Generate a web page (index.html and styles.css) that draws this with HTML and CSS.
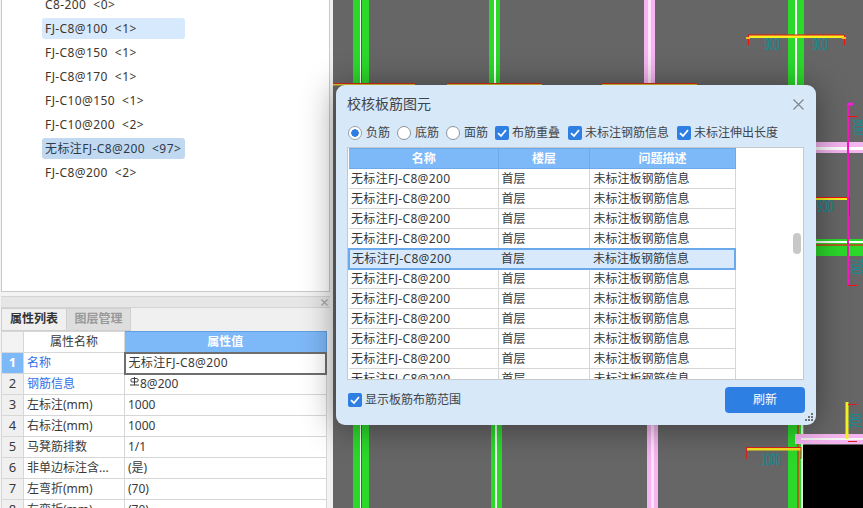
FILE: index.html
```html
<!DOCTYPE html>
<html lang="zh-CN">
<head>
<meta charset="utf-8">
<title>校核板筋图元</title>
<link rel="stylesheet" href="styles.css">
</head>
<body>
<div class="app">
  <aside class="side">
    <section class="tree">
      <ul class="tree-list">
        <li class="tree-item"><span>C8-200</span><i>&lt;0&gt;</i></li>
        <li class="tree-item hover"><span>FJ-C8@100</span><i>&lt;1&gt;</i></li>
        <li class="tree-item"><span>FJ-C8@150</span><i>&lt;1&gt;</i></li>
        <li class="tree-item"><span>FJ-C8@170</span><i>&lt;1&gt;</i></li>
        <li class="tree-item"><span>FJ-C10@150</span><i>&lt;1&gt;</i></li>
        <li class="tree-item"><span>FJ-C10@200</span><i>&lt;2&gt;</i></li>
        <li class="tree-item selected"><span>无标注FJ-C8@200</span><i>&lt;97&gt;</i></li>
        <li class="tree-item"><span>FJ-C8@200</span><i>&lt;2&gt;</i></li>
      </ul>
    </section>
    <div class="dock-bar"><svg class="dock-close" viewBox="0 0 7 7"><path d="M.5.500 6.500 6.500M6.500.500.500 6.500" stroke="#a6a6a6" stroke-width="1.200" fill="none"/></svg></div>
    <div class="tabs">
      <span class="tab active">属性列表</span>
      <span class="tab">图层管理</span>
    </div>
    <table class="props">
      <colgroup><col class="c-num"><col class="c-name"><col class="c-val"></colgroup>
      <thead>
        <tr><th class="corner"></th><th class="name-head">属性名称</th><th class="val-head">属性值</th></tr>
      </thead>
      <tbody>
        <tr><td class="num cur">1</td><td class="link">名称</td><td class="editing wide">无标注FJ-C8@200</td></tr>
        <tr><td class="num">2</td><td class="link">钢筋信息</td><td><svg class="rebar" viewBox="0 0 9 9"><path d="M4.500 0V8M1 2.500C1 1.500 2 1.500 4.500 1.500S8 1.500 8 2.500V4C8 5 7 5 4.500 5S1 5 1 4ZM0 8H9" stroke="#3a3a3a" fill="none"/></svg>8@200</td></tr>
        <tr><td class="num">3</td><td>左标注(mm)</td><td>1000</td></tr>
        <tr><td class="num">4</td><td>右标注(mm)</td><td>1000</td></tr>
        <tr><td class="num">5</td><td>马凳筋排数</td><td>1/1</td></tr>
        <tr><td class="num">6</td><td>非单边标注含...</td><td>(是)</td></tr>
        <tr><td class="num">7</td><td>左弯折(mm)</td><td>(70)</td></tr>
        <tr><td class="num">8</td><td>右弯折(mm)</td><td>(70)</td></tr>
      </tbody>
    </table>
  </aside>

  <main class="canvas">
    <svg class="drawing" viewBox="333 0 530 508" aria-hidden="true">
      <rect x="333" y="0" width="530" height="508" fill="#666666"/>
      <!-- vertical beams -->
      <rect x="353" y="0" width="16" height="508" fill="#2bd92b"/>
      <rect x="360" y="0" width="2" height="508" fill="#fff"/>
      <rect x="361" y="0" width="1" height="508" fill="#e81c1c"/>
      <rect x="489" y="0" width="11" height="240" fill="#2bd92b"/>
      <rect x="494" y="0" width="2" height="240" fill="#fff"/>
      <rect x="491" y="420" width="11" height="88" fill="#2bd92b"/>
      <rect x="495" y="420" width="2" height="88" fill="#f2f2f2"/>
      <rect x="644" y="0" width="11" height="240" fill="#f5b5f0"/>
      <rect x="648" y="0" width="3" height="240" fill="#fde3fb"/>
      <rect x="647" y="420" width="11" height="88" fill="#f5b5f0"/>
      <rect x="651" y="420" width="3" height="88" fill="#fde3fb"/>
      <rect x="788" y="0" width="16" height="508" fill="#2bd92b"/>
      <rect x="795" y="0" width="2" height="300" fill="#fff"/>
      <rect x="797" y="420" width="2" height="88" fill="#a5641c"/>
      <rect x="801" y="420" width="2" height="88" fill="#dff5df"/>
      <!-- horizontal beams -->
      <rect x="810" y="142" width="53" height="11" fill="#f5b5f0"/>
      <rect x="810" y="147" width="53" height="3" fill="#fff"/>
      <rect x="810" y="239" width="53" height="17" fill="#2bd92b"/>
      <rect x="810" y="241" width="53" height="2" fill="#fff"/>
      <rect x="810" y="244" width="53" height="2" fill="#a5641c"/>
      <rect x="795" y="434" width="68" height="10" fill="#f5b5f0"/>
      <rect x="801" y="438" width="62" height="2" fill="#f4f4f4"/>
      <rect x="803" y="445" width="60" height="63" fill="#000"/>
      <!-- dimension lines -->
      <g fill="none">
        <path d="M333 84.500H415M447 84.500H542M602 84.500H697" stroke="#d8c530" stroke-width="2"/>
        <path d="M333 83.500H415M447 83.500H542M602 83.500H697" stroke="#d82a1c"/>
        <path d="M748 36.500H844" stroke="#f5f020" stroke-width="3"/>
        <path d="M748 35H844M748.500 35V45M844.500 35V45" stroke="#f01010"/>
        <path d="M746 38H750M842 38H846" stroke="#f5c020" stroke-width="2"/>
        <path d="M816 199H849" stroke="#f5f020" stroke-width="2"/>
        <path d="M816 197.500H850M849.500 197V216" stroke="#f01010"/>
        <path d="M848 104V286" stroke="#f020e0" stroke-width="2"/>
        <path d="M848 105V286" stroke="#f5109a" stroke-width="1"/>
        <path d="M848 105C848 104 849 104 853 104" stroke="#f020e0" stroke-width="3"/>
        <path d="M848 116.500H857M848 285.500H857" stroke="#f01010"/>
        <path d="M847 402V439" stroke="#f5f020" stroke-width="3"/>
        <path d="M848 404.500H857M848 441.500H857" stroke="#d82020"/>
        <path d="M746 449H801" stroke="#f5e020" stroke-width="3"/>
        <path d="M746 447.500H801M746.500 447V459M801 447V459" stroke="#d82020"/>
      </g>
      <g class="dim">
        <text x="772" y="50" textLength="15" lengthAdjust="spacingAndGlyphs">900</text>
        <text x="820" y="50" textLength="15" lengthAdjust="spacingAndGlyphs">900</text>
        <text x="825" y="212" textLength="16" lengthAdjust="spacingAndGlyphs">900</text>
        <text x="771" y="465" textLength="19" lengthAdjust="spacingAndGlyphs">1000</text>
        <text transform="translate(854 127) rotate(90)" textLength="16" lengthAdjust="spacingAndGlyphs">800</text>
        <text transform="translate(851 266) rotate(90)" textLength="16" lengthAdjust="spacingAndGlyphs">700</text>
        <text transform="translate(861 421) rotate(-90)" textLength="15" lengthAdjust="spacingAndGlyphs">700</text>
      </g>
    </svg>
  </main>

  <section class="dialog">
    <header class="dlg-head">
      <h1 class="dlg-title">校核板筋图元</h1>
      <svg class="dlg-close" viewBox="0 0 11 11"><path d="M.5.500 10.500 10.500M10.500.500.500 10.500" stroke="#7f8388" stroke-width="1.100" fill="none"/></svg>
    </header>
    <div class="options">
      <label class="opt"><span class="radio on"></span>负筋</label>
      <label class="opt"><span class="radio"></span>底筋</label>
      <label class="opt"><span class="radio"></span>面筋</label>
      <label class="opt tight"><span class="check"><svg viewBox="0 0 14 14"><path d="M3 7.200 6 10 11 4" stroke="#fff" stroke-width="1.800" fill="none"/></svg></span>布筋重叠</label>
      <label class="opt tight"><span class="check"><svg viewBox="0 0 14 14"><path d="M3 7.200 6 10 11 4" stroke="#fff" stroke-width="1.800" fill="none"/></svg></span>未标注钢筋信息</label>
      <label class="opt tight"><span class="check"><svg viewBox="0 0 14 14"><path d="M3 7.200 6 10 11 4" stroke="#fff" stroke-width="1.800" fill="none"/></svg></span>未标注伸出长度</label>
    </div>
    <div class="grid-wrap">
      <table class="grid">
        <colgroup><col class="g1"><col class="g2"><col class="g3"></colgroup>
        <thead><tr><th>名称</th><th>楼层</th><th>问题描述</th></tr></thead>
        <tbody>
          <tr><td class="wide">无标注FJ-C8@200</td><td>首层</td><td>未标注板钢筋信息</td></tr>
          <tr><td class="wide">无标注FJ-C8@200</td><td>首层</td><td>未标注板钢筋信息</td></tr>
          <tr><td class="wide">无标注FJ-C8@200</td><td>首层</td><td>未标注板钢筋信息</td></tr>
          <tr><td class="wide">无标注FJ-C8@200</td><td>首层</td><td>未标注板钢筋信息</td></tr>
          <tr class="sel"><td class="wide">无标注FJ-C8@200</td><td>首层</td><td>未标注板钢筋信息</td></tr>
          <tr><td class="wide">无标注FJ-C8@200</td><td>首层</td><td>未标注板钢筋信息</td></tr>
          <tr><td class="wide">无标注FJ-C8@200</td><td>首层</td><td>未标注板钢筋信息</td></tr>
          <tr><td class="wide">无标注FJ-C8@200</td><td>首层</td><td>未标注板钢筋信息</td></tr>
          <tr><td class="wide">无标注FJ-C8@200</td><td>首层</td><td>未标注板钢筋信息</td></tr>
          <tr><td class="wide">无标注FJ-C8@200</td><td>首层</td><td>未标注板钢筋信息</td></tr>
          <tr><td class="wide">无标注FJ-C8@200</td><td>首层</td><td>未标注板钢筋信息</td></tr>
        </tbody>
      </table>
      <span class="thumb"></span>
    </div>
    <footer class="dlg-foot">
      <label class="opt tight"><span class="check"><svg viewBox="0 0 14 14"><path d="M3 7.200 6 10 11 4" stroke="#fff" stroke-width="1.800" fill="none"/></svg></span>显示板筋布筋范围</label>
      <button class="refresh" type="button">刷新</button>
    </footer>
    <svg class="grip" viewBox="0 0 8 8"><path d="M6 0h2v2H6zM3 3h2v2H3zM6 3h2v2H6zM0 6h2v2H0zM3 6h2v2H3zM6 6h2v2H6z" fill="#6d7074"/></svg>
  </section>
</div>
</body>
</html>
```
FILE: styles.css
```css
* { box-sizing: border-box; }
html, body { margin: 0; height: 100%; overflow: hidden; }
body {
  font: 12px/1.2 "Noto Sans", "Noto Sans CJK SC", sans-serif;
  color: #333;
  background: #fff;
}
.app { position: relative; display: flex; width: 863px; height: 508px; overflow: hidden; }
.wide { letter-spacing: .35px; }

/* left column */
.side { width: 333px; height: 508px; flex: none; display: flex; flex-direction: column; overflow: hidden; background: #f3f3f3; border-right: 3px solid #f0f0f0; padding-left: 1px; }
.tree { height: 292px; flex: none; width: 329px; background: #fff; border: 1px solid #c9c9c9; border-top: 0; overflow: hidden; }
.tree-list { list-style: none; margin: -6px 0 0; padding: 0 0 0 40px; display: flex; flex-direction: column; gap: 3px; }
.tree-item { width: 143px; height: 21px; padding: 1px 0 0 3px; border-radius: 3px; display: flex; align-items: center; gap: 7px; white-space: nowrap; color: #40362c; letter-spacing: .4px; }
.tree-item i { font-style: normal; font-size: 12px; letter-spacing: .5px; }
.tree-item.hover { background: #d7e9fd; }
.tree-item.selected { background: #c1d8f1; color: #2e3a4a; }

.dock-bar { height: 12px; margin-top: 4px; flex: none; width: 329px; background: #e6e6e6; border-top: 1px solid #d4d4d4; border-bottom: 1px solid #d4d4d4; display: flex; justify-content: flex-end; align-items: center; padding-right: 2px; }
.dock-close { width: 7px; height: 7px; display: block; }
.tabs { display: flex; height: 23px; flex: none; width: 329px; background: #f0f0f0; }
.tab { width: 65px; display: flex; align-items: center; justify-content: center; font-size: 12px; font-weight: 700; color: #999; background: #dedede; border: 1px solid #cfcfcf; }
.tab.active { color: #333; background: #f0f0f0; border-right: 0; }

.props { width: 326px; border-collapse: collapse; table-layout: fixed; background: #fff; flex: none; }
.c-num { width: 22px; } .c-name { width: 101px; }
.props th, .props td { height: 21px; padding: 0 0 0 3px; border: 1px solid #d7d7d7; font-weight: 400; text-align: left; white-space: nowrap; overflow: hidden; color: #3a3a3a; }
.props th { text-align: center; padding: 0; }
.props .corner { background: #f3f3f3; }
.props .val-head { background: #7db8f8; color: #fff; font-weight: 700; border: 1px solid #5f9fe0; }
.props .num { text-align: center; padding: 0; background: #f0f0f0; font-size: 13px; }
.props .num.cur { background: #7db8f8; color: #fff; font-weight: 700; }
.props .link { color: #2f6fe8; }
.props .editing { border: 2px solid #6e6e6e; }
.rebar { width: 9px; height: 9px; margin: 0 1px 0 2px; vertical-align: 2px; }

/* main drawing */
.canvas { flex: 1; min-width: 0; height: 508px; }
.drawing { display: block; width: 100%; height: 100%; }
.dim text { font: 16px "Liberation Sans Narrow", "Liberation Sans", sans-serif; fill: #0f8f98; text-anchor: middle; }

/* dialog */
.dialog { position: absolute; left: 336px; top: 85px; width: 480px; height: 340px; padding: 0 11px; display: flex; flex-direction: column; background: #d7e8f8; border-radius: 9px; box-shadow: 0 2px 34px rgba(0,0,0,.42); }
.dlg-head { height: 38px; flex: none; display: flex; align-items: center; justify-content: space-between; padding-right: 1px; }
.dlg-title { margin: 0; font-size: 14px; line-height: 38px; font-weight: 400; color: #3f454b; }
.dlg-close { width: 11px; height: 11px; display: block; }
.options { height: 20px; flex: none; display: flex; align-items: center; margin-left: 1px; gap: 7px; }
.opt { display: flex; align-items: center; gap: 4px; color: #3f454b; white-space: nowrap; }
.opt.tight { gap: 3px; margin-right: 1px; }
.radio { width: 14px; height: 14px; border-radius: 50%; background: #fff; border: 1px solid #8e9398; display: block; flex: none; }
.radio.on { background: radial-gradient(circle, #2f7fe3 0 3.500px, #fff 4px); border-color: #9aa0a6; }
.check { width: 14px; height: 14px; flex: none; border-radius: 2px; background: #2f7fe3; display: block; }
.check svg { display: block; width: 14px; height: 14px; }

.grid-wrap { position: relative; height: 233px; width: 457px; margin-top: 4px; flex: none; background: #fff; border: 1px solid #c6c9cc; overflow: hidden; }
.grid { width: 386px; border-collapse: collapse; table-layout: fixed; }
.g1 { width: 149px; } .g2 { width: 91px; } .g3 { width: 146px; }
.grid th, .grid td { height: 20px; padding: 1px 2px 0 3px; border: 1px solid #d6d6d6; white-space: nowrap; overflow: hidden; text-align: left; font-weight: 400; color: #33383d; }
.grid td:first-child { padding-left: 2px; }
.grid td:last-child { padding-left: 4px; }
.grid th { background: #7db8f8; border: 1px solid #6eaaeb; color: #fff; text-align: center; font-weight: 700; }
.grid tbody tr:first-child td { border-top: 0; }
.grid tr > :first-child { border-left: 0; }
.grid .sel td { background: #d7e9fb; border-top: 2px solid #6aa9ec; border-bottom: 2px solid #6aa9ec; border-left: 0; border-right: 0; }
.grid .sel td:first-child { border-left: 2px solid #6aa9ec; }
.grid .sel td:last-child { border-right: 2px solid #6aa9ec; }
.thumb { position: absolute; left: 445px; top: 85px; width: 8px; height: 21px; border-radius: 4px; background: #c8c8c8; }

.dlg-foot { flex: 1; display: flex; align-items: flex-start; justify-content: space-between; padding-top: 7px; margin-left: 1px; }
.dlg-foot .opt { margin-top: 6px; }
.refresh { width: 80px; height: 26px; border: 0; border-radius: 4px; background: #2d7fe3; color: #fff; font: inherit; font-size: 12px; padding: 0; }
.grip { position: absolute; right: 3px; bottom: 4px; width: 8px; height: 8px; }
```
